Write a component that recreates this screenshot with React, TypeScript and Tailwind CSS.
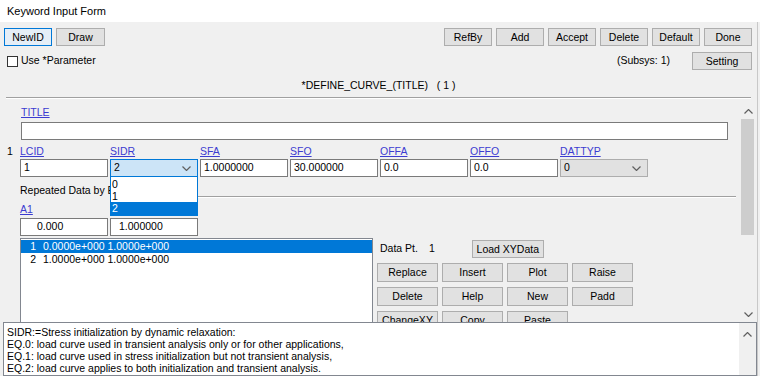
import React from "react";

function Btn({ label, className = "" }: { label: string; className?: string }) {
  return (
    <button
      className={`flex items-center justify-center border border-[#adadad] bg-[#e1e1e1] text-[10.5px] leading-none text-black ${className}`}
    >
      {label}
    </button>
  );
}

function Chevron({ up = false }: { up?: boolean }) {
  return (
    <svg width="9" height="5" viewBox="0 0 9 5">
      <path
        d={up ? "M0.5 4.5 L4.5 0.5 L8.5 4.5" : "M0.5 0.5 L4.5 4.5 L8.5 0.5"}
        stroke="#606060"
        strokeWidth="1.2"
        fill="none"
      />
    </svg>
  );
}

function Field({ value, className = "" }: { value: string; className?: string }) {
  return (
    <div
      className={`h-[18px] border border-[#7a7a7a] bg-white flex items-center text-[10.5px] ${className}`}
    >
      {value}
    </div>
  );
}

const labels = ["LCID", "SIDR", "SFA", "SFO", "OFFA", "OFFO", "DATTYP"];

const help = [
  "SIDR:=Stress initialization by dynamic relaxation:",
  "EQ.0: load curve used in transient analysis only or for other applications,",
  "EQ.1: load curve used in stress initialization but not transient analysis,",
  "EQ.2: load curve applies to both initialization and transient analysis.",
];

const actions = [
  "Replace",
  "Insert",
  "Plot",
  "Raise",
  "Delete",
  "Help",
  "New",
  "Padd",
  "ChangeXY",
  "Copy",
  "Paste",
];

export default function App() {
  return (
    <div className="w-[760px] h-[376px] overflow-hidden bg-[#f0f0f0] flex flex-col font-['Liberation_Sans',Arial,sans-serif] text-[10.5px] text-black">
      {/* Title bar */}
      <div className="h-[22px] shrink-0 bg-white flex items-center pl-[7px] text-[11px]">
        Keyword Input Form
      </div>

      <div className="flex-1 min-h-0 flex flex-col mr-[2px] border-r border-[#c8c8c8]">
        {/* Toolbar */}
        <div className="mt-[6px] h-[18px] shrink-0 flex pl-[4px] pr-[5px]">
          <div className="flex gap-[4px]">
            <button className="w-[48px] h-[18px] flex items-center justify-center border border-[#0078d7] bg-[#e5eef7] text-[10.5px] leading-none">
              NewID
            </button>
            <Btn label="Draw" className="w-[49px] h-[18px]" />
          </div>
          <div className="ml-auto flex gap-[4px]">
            {["RefBy", "Add", "Accept", "Delete", "Default", "Done"].map((b) => (
              <Btn key={b} label={b} className="w-[48px] h-[18px]" />
            ))}
          </div>
        </div>

        <div className="mt-[6px] h-[18px] shrink-0 flex items-center pl-[7px] pr-[5px]">
          <span className="w-[11px] h-[11px] border border-[#333333] bg-white" />
          <span className="ml-[3px]">Use *Parameter</span>
          <span className="ml-auto mr-[22px]">(Subsys: 1)</span>
          <Btn label="Setting" className="w-[60px] h-[18px]" />
        </div>

        <div className="mt-[8px] h-[16px] shrink-0 flex items-center justify-center whitespace-pre">
          *DEFINE_CURVE_(TITLE)   ( 1 )
        </div>

        <div className="mt-[3px] mx-[6px] h-[2px] shrink-0 border-t border-[#a0a0a0] border-b border-b-white" />

        {/* Scrolling card area */}
        <div className="mt-[4px] h-[219px] shrink-0 flex">
          <div className="flex-1 min-w-0 overflow-hidden">
            <div className="mt-[3px] h-[14px] pl-[21px] flex items-center">
              <span className="text-[#3c3cd0] underline">TITLE</span>
            </div>
            <div className="mt-[2px] ml-[21px] w-[707px] h-[18px] border border-[#7a7a7a] bg-white" />

            <div className="mt-[5px] h-[14px] flex items-center pl-[7px]">
              <span className="w-[13px]">1</span>
              <div className="grid grid-cols-[repeat(7,88px)] gap-x-[2px]">
                {labels.map((l) => (
                  <span key={l} className="text-[#3c3cd0] underline">
                    {l}
                  </span>
                ))}
              </div>
            </div>

            <div className="h-[18px] pl-[20px] grid grid-cols-[repeat(7,88px)] gap-x-[2px]">
              <Field value="1" className="pl-[3px]" />
              <div className="relative z-10">
                <div className="h-[18px] border border-[#0078d7] bg-[#cce4f7] flex items-center pl-[3px] pr-[6px]">
                  <span>2</span>
                  <span className="ml-auto flex">
                    <Chevron />
                  </span>
                </div>
                <div className="absolute left-0 top-[18px] w-[88px] border border-t-0 border-[#0078d7] bg-white leading-[12px]">
                  <div className="h-[12px] pl-[1px] mt-[1px]">0</div>
                  <div className="h-[12px] pl-[1px]">1</div>
                  <div className="h-[13px] pl-[1px] bg-[#0078d7] text-white">2</div>
                </div>
              </div>
              <Field value="1.0000000" className="pl-[3px]" />
              <Field value="30.000000" className="pl-[3px]" />
              <Field value="0.0" className="pl-[3px]" />
              <Field value="0.0" className="pl-[3px]" />
              <div className="h-[18px] border border-[#adadad] bg-[#e1e1e1] flex items-center pl-[3px] pr-[6px]">
                <span>0</span>
                <span className="ml-auto flex">
                  <Chevron />
                </span>
              </div>
            </div>

            <div className="mt-[5px] h-[16px] flex items-end pl-[20px] pr-[4px]">
              <span className="w-[90px] overflow-hidden leading-[14px] mb-[1px] whitespace-nowrap">
                Repeated Data by Each Point
              </span>
              <div className="flex-1 h-[2px] border-t border-[#a0a0a0] border-b border-b-white" />
            </div>

            <div className="mt-[5px] h-[14px] pl-[20px] flex items-center">
              <span className="text-[#3c3cd0] underline">A1</span>
            </div>
            <div className="mt-[1px] pl-[20px] flex gap-[2px]">
              <Field value="0.000" className="w-[88px] pl-[16px]" />
              <Field value="1.000000" className="w-[88px] pl-[8px]" />
            </div>

            <div className="mt-[2px] flex">
              <div className="ml-[20px] w-[353px] h-[100px] border border-[#828790] bg-white pt-[1px] leading-[13px]">
                <div className="h-[13px] flex bg-[#0078d7] text-white whitespace-pre">
                  <span className="w-[15px] text-right">1</span>
                  <span className="ml-[7px]">0.0000e+000 1.0000e+000</span>
                </div>
                <div className="h-[13px] flex whitespace-pre">
                  <span className="w-[15px] text-right">2</span>
                  <span className="ml-[7px]">1.0000e+000 1.0000e+000</span>
                </div>
              </div>

              <div className="ml-[4px] mt-[2px] flex flex-col">
                <div className="h-[18px] flex items-center">
                  <span className="ml-[3px]">Data Pt.</span>
                  <span className="ml-[11px]">1</span>
                  <Btn label="Load XYData" className="ml-[37px] w-[72px] h-[18px]" />
                </div>
                <div className="mt-[5px] grid grid-cols-[repeat(4,61px)] gap-x-[4px] gap-y-[5px]">
                  {actions.map((a) => (
                    <Btn key={a} label={a} className="h-[19px]" />
                  ))}
                </div>
              </div>
            </div>
          </div>

          {/* vertical scrollbar */}
          <div className="w-[17px] flex flex-col bg-[#f0f0f0]">
            <div className="h-[16px] flex items-center justify-center">
              <Chevron up />
            </div>
            <div className="ml-[1px] w-[13px] h-[116px] bg-[#cdcdcd]" />
            <div className="flex-1" />
            <div className="h-[16px] flex items-center justify-center">
              <Chevron />
            </div>
          </div>
        </div>

        {/* Help text panel */}
        <div className="flex-1 min-h-0 ml-[3px] border border-[#828790] bg-white flex">
          <div className="flex-1 pl-[3px] pt-[3px] leading-[12px] whitespace-nowrap">
            {help.map((h) => (
              <div key={h}>{h}</div>
            ))}
          </div>
          <div className="w-[17px] bg-[#f0f0f0] flex flex-col">
            <div className="h-[22px] flex items-center justify-center">
              <Chevron up />
            </div>
          </div>
        </div>
      </div>
    </div>
  );
}
